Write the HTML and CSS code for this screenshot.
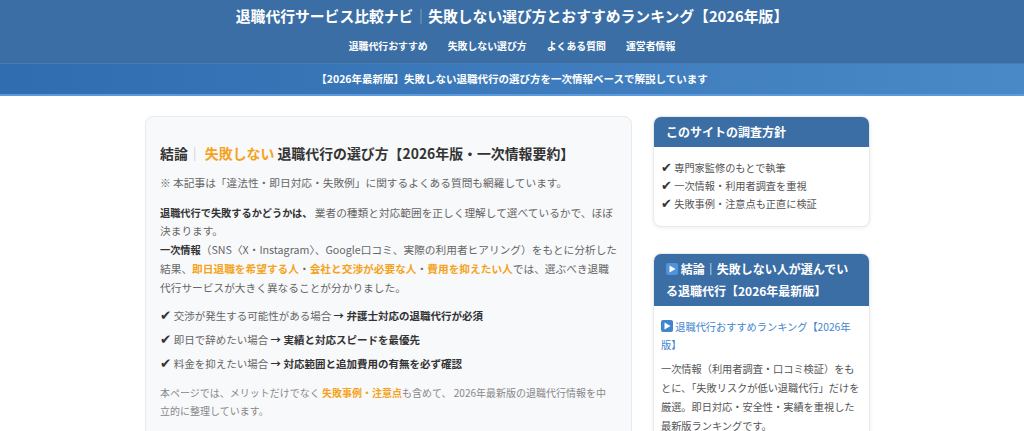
FILE: index.html
```html
<!DOCTYPE html>
<html lang="ja">
<head>
    <meta charset="UTF-8">
    <meta name="viewport" content="width=device-width, initial-scale=1.0">
    <title>退職代行サービス比較ナビ</title>
    <link rel="stylesheet" href="styles.css">
</head>
<body>
    <header class="site-header">
        <h1 class="site-title">退職代行サービス比較ナビ<span class="bar">｜</span>失敗しない選び方とおすすめランキング【2026年版】</h1>
        <nav class="site-nav">
            <a href="#ranking">退職代行おすすめ</a>
            <a href="#howto">失敗しない選び方</a>
            <a href="#faq">よくある質問</a>
            <a href="#about">運営者情報</a>
        </nav>
    </header>

    <div class="notice">【2026年最新版】失敗しない退職代行の選び方を一次情報ベースで解説しています</div>

    <div class="layout">
        <main class="card" id="howto">
            <h2 class="card-title">結論<span class="sep">｜</span> <span class="accent">失敗しない</span> 退職代行の選び方【2026年版・一次情報要約】</h2>
            <p class="lead">※ 本記事は「違法性・即日対応・失敗例」に関するよくある質問も網羅しています。</p>
            <p class="text">
                <strong>退職代行で失敗するかどうかは、</strong> 業者の種類と対応範囲を正しく理解して選べているかで、ほぼ決まります。<br>
                <strong>一次情報</strong>（SNS〈X・Instagram〉、Google口コミ、実際の利用者ヒアリング）をもとに分析した結果、<span class="hl">即日退職を希望する人</span>・<span class="hl">会社と交渉が必要な人</span>・<span class="hl">費用を抑えたい人</span>では、選ぶべき退職代行サービスが大きく異なることが分かりました。
            </p>
            <ul class="checks">
                <li><span class="tick">✔</span> 交渉が発生する可能性がある場合 <strong>→ 弁護士対応の退職代行が必須</strong></li>
                <li><span class="tick">✔</span> 即日で辞めたい場合 <strong>→ 実績と対応スピードを最優先</strong></li>
                <li><span class="tick">✔</span> 料金を抑えたい場合 <strong>→ 対応範囲と追加費用の有無を必ず確認</strong></li>
            </ul>
            <p class="note">本ページでは、メリットだけでなく <span class="hl">失敗事例・注意点</span>も含めて、 2026年最新版の退職代行情報を中立的に整理しています。</p>
        </main>

        <aside class="sidebar">
            <div class="box">
                <div class="box-head">このサイトの調査方針</div>
                <ul class="box-list">
                    <li><span class="tick">✔</span> 専門家監修のもとで執筆</li>
                    <li><span class="tick">✔</span> 一次情報・利用者調査を重視</li>
                    <li><span class="tick">✔</span> 失敗事例・注意点も正直に検証</li>
                </ul>
            </div>

            <div class="box" id="ranking">
                <div class="box-head">
                    <svg class="play" viewBox="0 0 12 12"><rect width="12" height="12" rx="2" fill="#4f93d8"/><path d="M3.5 2.5 L9.5 6 L3.5 9.5 Z" fill="#fff"/></svg>
                    結論｜失敗しない人が選んでいる退職代行【2026年最新版】
                </div>
                <div class="box-body">
                    <a class="box-link" href="#ranking"><svg class="play" viewBox="0 0 12 12"><rect width="12" height="12" rx="2" fill="#3f86cf"/><path d="M3.5 2.5 L9.5 6 L3.5 9.5 Z" fill="#fff"/></svg> 退職代行おすすめランキング【2026年版】</a>
                    <p>一次情報（利用者調査・口コミ検証）をもとに、「失敗リスクが低い退職代行」だけを厳選。即日対応・安全性・実績を重視した最新版ランキングです。</p>
                </div>
            </div>
        </aside>
    </div>
</body>
</html>
```

FILE: styles.css
```css
body {
    font-family: "Noto Sans CJK JP", "Liberation Sans", sans-serif;
    background-color: #fff;
    color: #666;
    margin: 0;
    padding: 0;
}

.site-header {
    background-color: #3b6ea5;
    color: white;
    text-align: center;
    padding: 5px 0 8px;
}

.site-title {
    font-size: 14.8px;
    line-height: 22px;
    margin: 0;
    font-weight: bold;
}

.site-title .bar {
    color: rgba(255, 255, 255, 0.45);
    font-weight: normal;
}

.site-nav {
    margin-top: 10px;
    display: flex;
    justify-content: center;
    gap: 20px;
    line-height: 18px;
}

.site-nav a {
    color: white;
    text-decoration: none;
    font-size: 9.9px;
    font-weight: bold;
}

.notice {
    background: linear-gradient(90deg, #2f6cb0, #4a89c7);
    border-top: 1px solid #4a7db4;
    border-bottom: 2px solid #5b9ade;
    color: white;
    text-align: center;
    font-size: 10.5px;
    font-weight: bold;
    line-height: 30px;
}

.layout {
    display: grid;
    grid-template-columns: 487px 217px;
    gap: 21px;
    justify-content: center;
    align-items: start;
    margin-top: 20px;
    padding-right: 9px;
}

.card {
    background-color: #f8f9fb;
    border: 1px solid #e8eaee;
    border-radius: 8px;
    padding: 25px 12px 20px 14px;
}

.card-title {
    font-size: 13.9px;
    line-height: 22px;
    color: #333;
    margin: 0;
}

.card-title .sep {
    color: #c8c8c8;
    font-weight: normal;
}

.accent {
    color: #f5a31c;
}

.lead {
    font-size: 10.7px;
    line-height: 18.7px;
    margin: 10px 0 0;
}

.text {
    font-size: 10.7px;
    line-height: 18.7px;
    margin: 11px 0 0;
}

.text strong {
    font-size: 10.2px;
    color: #333;
}

.hl {
    color: #f5a31c;
    font-weight: bold;
}

.checks {
    list-style: none;
    margin: 10px 0 0;
    padding: 0;
    font-size: 10.5px;
    line-height: 18.7px;
}

.checks li {
    margin-bottom: 5.3px;
}

.checks strong {
    color: #333;
}

.tick {
    font-family: "DejaVu Sans", sans-serif;
    color: #333;
    font-size: 13.5px;
    line-height: 1;
}

.note {
    font-size: 10px;
    line-height: 18px;
    color: #888;
    margin: 10px 0 0;
    max-width: 448px;
}

.sidebar {
    display: flex;
    flex-direction: column;
    gap: 26px;
}

.box {
    background-color: white;
    border: 1px solid #e6e9ee;
    border-radius: 8px;
    box-shadow: 0 1px 4px rgba(0, 0, 0, 0.07);
    overflow: hidden;
}

.box-head {
    background-color: #3b6ea5;
    color: white;
    font-size: 12px;
    font-weight: bold;
    line-height: 22px;
    padding: 4px 12px;
}

.play {
    width: 12px;
    height: 12px;
    vertical-align: -1px;
}

.box-list {
    list-style: none;
    margin: 0;
    padding: 12px 8px 13px 7px;
    font-size: 10.2px;
    line-height: 18px;
    color: #555;
}

.box-list .tick {
    font-size: 13px;
}

.box-body {
    padding: 12px 8px 6px 7px;
    font-size: 10.2px;
    color: #555;
}

.box-link {
    display: block;
    color: #3f86cf;
    text-decoration: none;
    line-height: 18px;
}

.box-body p {
    margin: 5px 0 0;
    line-height: 19px;
}
```
